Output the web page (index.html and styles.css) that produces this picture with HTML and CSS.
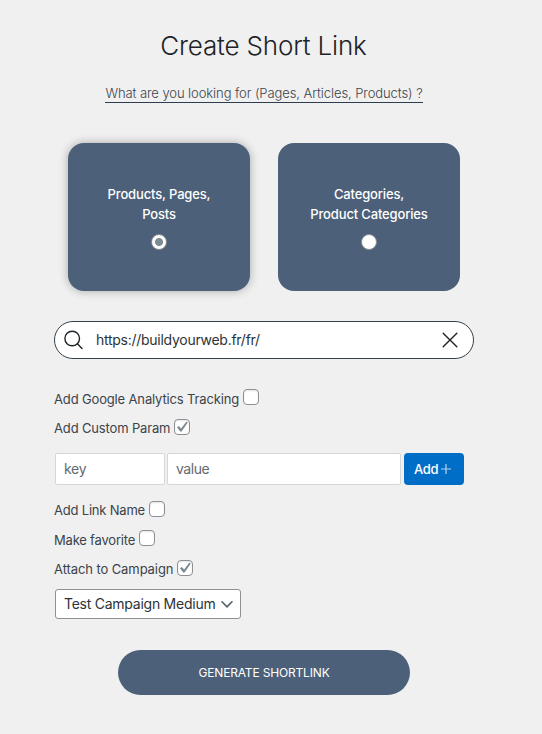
FILE: index.html
```html
<!DOCTYPE html>
<html lang="en">
<head>
<meta charset="utf-8">
<title>Create Short Link</title>
<link rel="stylesheet" href="styles.css">
</head>
<body>
<main class="form">
  <h1 class="title">Create Short Link</h1>
  <p class="lead"><span class="lead-text">What are you looking for (Pages, Articles, Products) ?</span></p>
  <div class="cards">
    <label class="card card-active"><span>Products, Pages,<br>Posts</span><i class="radio radio-on"></i></label>
    <label class="card"><span>Categories,<br>Product Categories</span><i class="radio"></i></label>
  </div>
  <div class="search">
    <svg class="search-icon" width="20" height="20" viewBox="0 0 20 20"><circle cx="8.2" cy="8.5" r="7.3"/><path d="M13.4 13.7l4.6 4.7"/></svg>
    <span class="search-text">https://buildyourweb.fr/fr/</span>
    <svg class="clear-icon" width="16" height="16" viewBox="0 0 16 16"><path d="M1.2 1.2l13.6 13.6M14.8 1.2L1.2 14.8"/></svg>
  </div>
  <div class="option option-ga"><span>Add Google Analytics Tracking</span><i class="check"></i></div>
  <div class="option option-param"><span class="raised">Add Custom Param</span><i class="check"><svg viewBox="0 0 14 14"><path d="M2 7.2L3.9 6l2.2 2.4L11.3 1.8l1.5.8-6.2 9H5.2z"/></svg></i></div>
  <div class="params">
    <div class="input input-key">key</div>
    <div class="input input-value">value</div>
    <div class="add">Add<svg width="10" height="10" viewBox="0 0 10 10"><path d="M5 0v10M0 5h10"/></svg></div>
  </div>
  <div class="option option-name"><span class="raised">Add Link Name</span><i class="check"></i></div>
  <div class="option option-fav"><span>Make favorite</span><i class="check"></i></div>
  <div class="option option-camp"><span class="raised">Attach to Campaign</span><i class="check"><svg viewBox="0 0 14 14"><path d="M2 7.2L3.9 6l2.2 2.4L11.3 1.8l1.5.8-6.2 9H5.2z"/></svg></i></div>
  <div class="select"><span>Test Campaign Medium</span><svg width="12" height="8" viewBox="0 0 12 8"><path d="M1 1.8l5 5 5-5"/></svg></div>
  <div class="submit"><span>GENERATE SHORTLINK</span></div>
</main>
</body>
</html>
```
FILE: styles.css
```css
* { box-sizing: border-box; }
body {
  margin: 0;
  background: #f0f0f0;
  color: #3c434a;
  font-family: Inter, "Liberation Sans", sans-serif;
  font-size: 13px;
}
.form { width: 420px; margin-left: 54px; }
.title {
  margin: 0;
  padding: 30px 1px 0 0;
  text-align: center;
  font-size: 26px;
  line-height: 32px;
  font-weight: 300;
  letter-spacing: -.16px;
  color: #1d2327;
}
.lead { margin: 22px 0 0; height: 20px; text-align: center; line-height: 18px; font-weight: 300; letter-spacing: -.075px; }
.lead-text { display: inline-block; border-bottom: 1px solid #2c3e50; }
.cards { display: flex; gap: 28px; margin: 39px 14px 0; }
.card {
  width: 182px;
  height: 148px;
  border-radius: 16px;
  background: #4c6079;
  color: #fff;
  display: flex;
  flex-direction: column;
  align-items: center;
  padding-top: 41px;
  text-align: center;
  line-height: 20px;
  font-weight: 500;
  letter-spacing: -.15px;
}
.card-active { box-shadow: 0 0 10px rgba(0, 0, 0, .3); }
.radio {
  width: 16px;
  height: 16px;
  margin-top: 10px;
  border: 1px solid #8c8f94;
  border-radius: 50%;
  background: #fff;
}
.radio-on { background: radial-gradient(circle, #7d8b94 3.6px, #fff 4.4px); }
.search {
  display: flex;
  align-items: center;
  height: 38px;
  margin-top: 30px;
  padding: 0 15px 0 9px;
  border: 1px solid #36434d;
  border-radius: 19px;
  background: #fff;
  font-size: 14px;
  letter-spacing: -.27px;
  color: #2c3338;
}
svg { fill: none; stroke: #1d2327; stroke-width: 1.4; stroke-linecap: round; flex: none; }
.search-text { margin-left: 12px; padding-bottom: 2px; flex: 1; }
.option { display: flex; height: 16px; line-height: 20px; align-items: flex-start; letter-spacing: -.15px; }
.raised { margin-top: -1px; }
.check {
  width: 16px;
  height: 16px;
  margin-left: 4px;
  border: 1px solid #8c8f94;
  border-radius: 4px;
  background: #fff;
  box-shadow: inset 0 1px 2px rgba(0, 0, 0, .1);
  flex: none;
}
.check svg { display: block; width: 14px; height: 14px; fill: #7c8993; stroke: none; }
.option-ga { margin-top: 30px; }
.option-param { margin-top: 14px; }
.params { display: flex; margin: 18px 0 0 1px; height: 32px; }
.input {
  height: 32px;
  border: 1px solid #d6d7d9;
  border-radius: 2px;
  background: #fff;
  padding-left: 8px;
  line-height: 30px;
  font-size: 14px;
  letter-spacing: -.25px;
  color: #646970;
}
.input-key { width: 110px; }
.input-value { width: 234px; margin-left: 2px; letter-spacing: -.45px; }
.add {
  width: 60px;
  margin-left: 3px;
  border-radius: 4px;
  background: #006dc7;
  color: #fff;
  display: flex;
  align-items: center;
  padding-left: 10px;
  font-weight: 500;
  letter-spacing: -.3px;
}
.add svg { margin-left: 3px; stroke: #b5d4ee; stroke-width: 1.2; stroke-linecap: butt; }
.option-name { margin-top: 16px; letter-spacing: -.2px; }
.option-fav { margin-top: 13px; letter-spacing: -.2px; }
.option-camp { margin-top: 14px; letter-spacing: -.09px; }
.select {
  display: flex;
  align-items: center;
  width: 186px;
  height: 30px;
  margin: 13px 0 0 1px;
  padding: 0 7px 1px 8px;
  border: 1px solid #8c8f94;
  border-radius: 3px;
  background: #fff;
  justify-content: space-between;
  font-size: 14px;
  letter-spacing: -.25px;
  white-space: nowrap;
  color: #2c3338;
}
.select svg { stroke: #555d66; stroke-width: 1.6; }
.submit {
  display: flex;
  align-items: center;
  justify-content: center;
  width: 292px;
  height: 45px;
  margin: 31px 0 0 64px;
  border-radius: 23px;
  background: #4c6079;
  color: #fff;
  font-size: 12px;
  letter-spacing: -.17px;
}
```
